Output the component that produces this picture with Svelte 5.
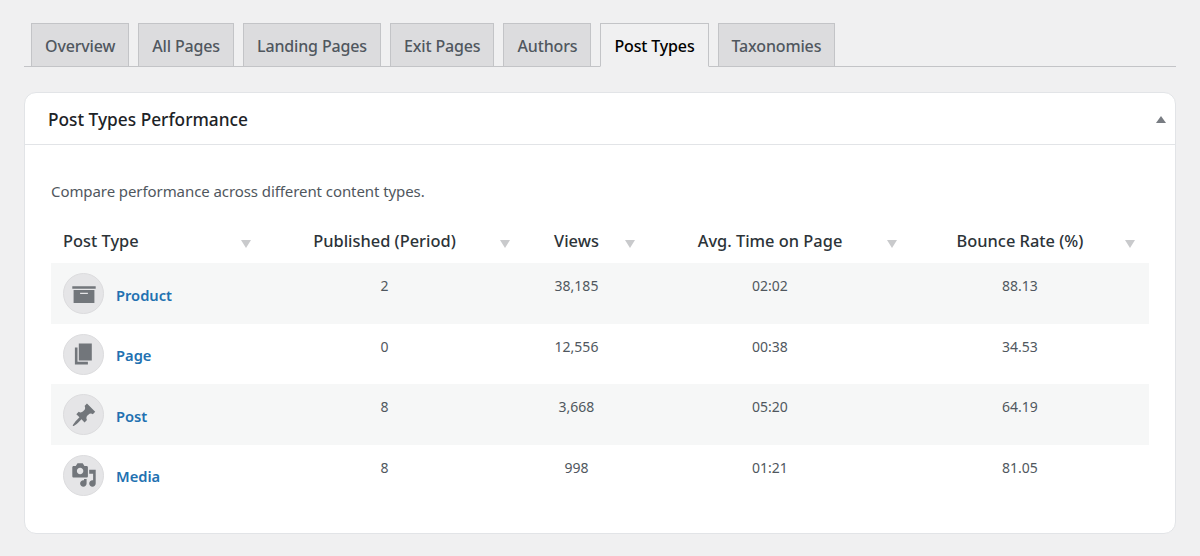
<script>
  const tabs = ['Overview', 'All Pages', 'Landing Pages', 'Exit Pages', 'Authors', 'Post Types', 'Taxonomies'];
  const cols = [
    { label: 'Post Type', w: 214 },
    { label: 'Published (Period)', w: 259 },
    { label: 'Views', w: 125 },
    { label: 'Avg. Time on Page', w: 262 },
    { label: 'Bounce Rate (%)', w: 238 }
  ];
  const icons = {
    archive: 'M19 4v2H1V4h18zM2 7h16v10H2V7zm11 3V9H7v1h6z',
    page: 'M6 15V2h10v13H6zm-1 1h8v2H3V5h2v11z',
    post: 'M10.44 3.02l1.82-1.82 6.36 6.35-1.83 1.82c-1.05-.68-2.48-.57-3.41.36l-.75.75c-.92.93-1.04 2.35-.35 3.41l-1.83 1.82-2.41-2.41-2.8 2.79c-.42.42-3.38 2.71-3.8 2.29s1.86-3.39 2.28-3.81l2.79-2.79L4.1 9.36l1.83-1.82c1.05.69 2.48.57 3.4-.36l.75-.75c.93-.92 1.05-2.35.36-3.41z',
    media: 'M13 11V4c0-.55-.45-1-1-1h-1.67L9 1H5L3.67 3H2c-.55 0-1 .45-1 1v7c0 .55.45 1 1 1h10c.55 0 1-.45 1-1zM7 4.5c1.38 0 2.5 1.12 2.5 2.5S8.38 9.5 7 9.5 4.5 8.38 4.5 7 5.62 4.5 7 4.5zM14 6h5v10.5c0 1.38-1.12 2.5-2.5 2.5S14 17.88 14 16.5s1.12-2.5 2.5-2.5c.17 0 .34.02.5.05V9h-3V6zm-4 8.05V13h2v3.5c0 1.38-1.12 2.5-2.5 2.5S7 17.88 7 16.5 8.12 14 9.5 14c.17 0 .34.02.5.05z'
  };
  const rows = [
    { name: 'Product', icon: 'archive', vals: ['2', '38,185', '02:02', '88.13'] },
    { name: 'Page', icon: 'page', vals: ['0', '12,556', '00:38', '34.53'] },
    { name: 'Post', icon: 'post', vals: ['8', '3,668', '05:20', '64.19'] },
    { name: 'Media', icon: 'media', vals: ['8', '998', '01:21', '81.05'] }
  ];
</script>

<div class="page">
  <nav class="tabs">
    {#each tabs as t}
      <a href="#{t}" class="tab" class:active={t === 'Post Types'}>{t}</a>
    {/each}
  </nav>

  <section class="card">
    <header class="head">
      <h2>Post Types Performance</h2>
      <span class="toggle"></span>
    </header>
    <div class="body">
      <p class="desc">Compare performance across different content types.</p>
      <table>
        <colgroup>
          {#each cols as c}<col style="width: {c.w}px" />{/each}
        </colgroup>
        <thead>
          <tr>
            {#each cols as c}
              <th><span>{c.label}</span><i class="sort"></i></th>
            {/each}
          </tr>
        </thead>
        <tbody>
          {#each rows as r}
            <tr>
              <td class="name">
                <div class="cell">
                  <span class="circle">
                    <svg viewBox="0 0 20 20" width="26" height="26"><path d={icons[r.icon]} /></svg>
                  </span>
                  <a href="#{r.name}">{r.name}</a>
                </div>
              </td>
              {#each r.vals as v}<td>{v}</td>{/each}
            </tr>
          {/each}
        </tbody>
      </table>
    </div>
  </section>
</div>

<style>
  :global(body) {
    margin: 0;
    background: #f0f0f1;
  }
  .page {
    padding: 23px 24px 0;
    font-family: 'Noto Sans', 'Open Sans', sans-serif;
    color: #3c434a;
    height: 533px;
  }
  .tabs {
    display: flex;
    gap: 9px;
    padding-left: 7px;
    border-bottom: 1px solid #c3c4c7;
    height: 43px;
  }
  .tab {
    box-sizing: border-box;
    height: 44px;
    padding: 1px 13px 0;
    display: flex;
    align-items: center;
    border: 1px solid #c3c4c7;
    background: #dcdcde;
    color: #50575e;
    font-size: 16px;
    font-weight: 500;
    letter-spacing: -0.15px;
    text-decoration: none;
  }
  .tab.active {
    background: #f0f0f1;
    border-bottom-color: #f0f0f1;
    color: #000;
  }
  .card {
    box-sizing: border-box;
    margin-top: 25px;
    height: 442px;
    background: #fff;
    border: 1px solid #e2e4e7;
    border-radius: 12px;
  }
  .head {
    height: 52px;
    box-sizing: border-box;
    display: flex;
    align-items: center;
    justify-content: space-between;
    padding: 1px 9px 0 23px;
    border-bottom: 1px solid #e2e4e7;
  }
  h2 {
    margin: 0;
    font-size: 17.3px;
    font-weight: 500;
    color: #1d2327;
  }
  .toggle {
    width: 0;
    height: 0;
    border-left: 5px solid transparent;
    border-right: 5px solid transparent;
    border-bottom: 7px solid #787c82;
  }
  .body {
    padding: 36px 26px 0;
  }
  .desc {
    margin: 0;
    font-size: 15px;
    line-height: 20px;
    letter-spacing: -0.08px;
    color: #50575e;
  }
  table {
    margin-top: 20px;
    width: 1098px;
    border-collapse: collapse;
    table-layout: fixed;
    font-size: 14px;
  }
  th {
    position: relative;
    height: 42px;
    box-sizing: border-box;
    padding: 0 32px 4px 12px;
    text-align: center;
    font-size: 16.4px;
    font-weight: 500;
    color: #2c3338;
    white-space: nowrap;
  }
  th:first-child {
    text-align: left;
  }
  .sort {
    position: absolute;
    right: 14px;
    top: 19px;
    width: 0;
    height: 0;
    border-left: 5px solid transparent;
    border-right: 5px solid transparent;
    border-top: 8px solid #c9cacc;
  }
  td {
    padding: 13px 32px 0 12px;
    text-align: center;
    vertical-align: top;
    height: 60.5px;
    box-sizing: border-box;
    color: #50575e;
    line-height: 20px;
  }
  tbody tr:nth-child(odd) {
    background: #f6f7f7;
  }
  td.name {
    padding-top: 10px;
    text-align: left;
  }
  .cell {
    display: flex;
    align-items: center;
    gap: 12px;
  }
  .cell a {
    color: #2271b1;
    font-weight: 600;
    font-size: 14.7px;
    text-decoration: none;
    position: relative;
    top: 1px;
  }
  .circle {
    box-sizing: border-box;
    width: 41px;
    height: 41px;
    border-radius: 50%;
    background: #e5e5e7;
    border: 1px solid #dcdcde;
    display: flex;
    align-items: center;
    justify-content: center;
  }
  .circle svg {
    fill: #72767b;
  }
</style>
